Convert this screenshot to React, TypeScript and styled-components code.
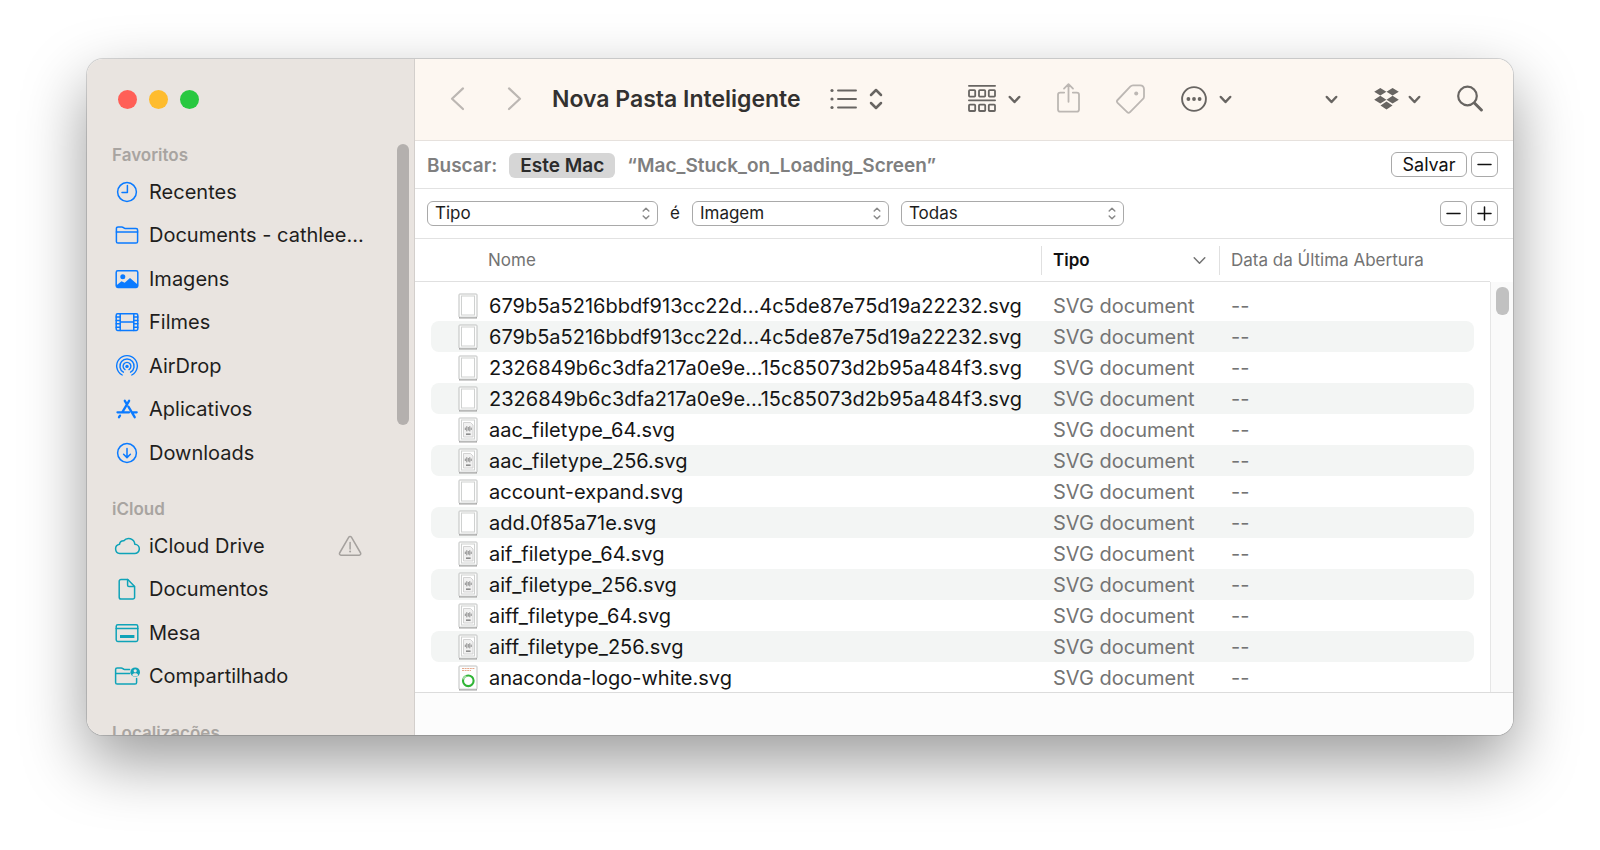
import React from "react";
import styled, { createGlobalStyle, css } from "styled-components";

const GlobalStyle = createGlobalStyle`
  * { box-sizing: border-box; }
  body {
    margin: 0;
    background: #fff;
    font-family: Inter, "Liberation Sans", sans-serif;
    color: #1d1d1d;
  }
  button, select { font: inherit; color: inherit; }
  svg { display: block; flex: none; }
`;

/* ---------- Window frame ---------- */

const Desktop = styled.div`
  display: flex;
  height: 100vh;
  padding: 59px 87px 115px;
  overflow: hidden;
`;

const Window = styled.div`
  display: flex;
  flex: 1;
  min-width: 0;
  overflow: hidden;
  border-radius: 16px;
  background: #fff;
  box-shadow: 0 0 0 1px rgba(0, 0, 0, 0.14), 0 26px 64px rgba(0, 0, 0, 0.4);
`;

/* ---------- Sidebar ---------- */

const Sidebar = styled.aside`
  position: relative;
  flex: 0 0 328px;
  overflow: hidden;
  border-right: 1px solid #d3cfcc;
  background: #e9e4e0;
`;

const TrafficLights = styled.div`
  display: flex;
  align-items: center;
  gap: 12px;
  height: 81px;
  padding-left: 31px;
`;

const Light = styled.button<{ $color: string }>`
  width: 19px;
  height: 19px;
  padding: 0;
  border: 0;
  border-radius: 50%;
  background: ${(p) => p.$color};
`;

const Section = styled.section`
  margin-bottom: 20px;
`;

const SectionTitle = styled.h2`
  margin: 0;
  padding-left: 25px;
  font-size: 17px;
  font-weight: 600;
  line-height: 30px;
  color: #a8a4a1;
`;

const Places = styled.ul`
  display: grid;
  grid-auto-rows: 43px 44px;
  margin: 0;
  padding: 0;
  list-style: none;
`;

const Place = styled.a<{ $tint: string }>`
  display: flex;
  align-items: center;
  gap: 9px;
  height: 100%;
  padding: 0 51px 0 27px;
  color: ${(p) => p.$tint};
  text-decoration: none;
`;

const PlaceName = styled.span`
  flex: 1;
  font-size: 20px;
  line-height: 28px;
  color: #1f1e1d;
  white-space: nowrap;
`;

const SidebarThumb = styled.div`
  position: absolute;
  top: 85px;
  right: 5px;
  width: 12px;
  height: 281px;
  border-radius: 6px;
  background: #b4b0ae;
`;

/* ---------- Main column ---------- */

const Main = styled.main`
  display: flex;
  flex: 1;
  flex-direction: column;
  min-width: 0;
`;

const Toolbar = styled.header`
  display: flex;
  flex: none;
  align-items: center;
  height: 82px;
  padding: 0 30px 2px 34px;
  border-bottom: 1px solid #e6e1dd;
  background: #fdf7f1;
`;

const ToolGroup = styled.div<{ $gap: number; $end?: boolean }>`
  display: flex;
  align-items: center;
  gap: ${(p) => p.$gap}px;
  ${(p) => p.$end && css`margin-left: auto;`}
`;

const ToolButton = styled.button<{ $dim?: boolean; $width?: number; $tight?: boolean }>`
  display: flex;
  align-items: center;
  justify-content: flex-end;
  gap: ${(p) => (p.$tight ? 9 : 12)}px;
  ${(p) => p.$width && css`width: ${p.$width}px;`}
  padding: 0;
  border: 0;
  background: none;
  color: ${(p) => (p.$dim ? "#bcb7b3" : "#686562")};
`;

const Title = styled.h1`
  margin: 0 29px;
  font-size: 23px;
  font-weight: 600;
  line-height: 32px;
  color: #333130;
  white-space: nowrap;
`;

const Bar = styled.div<{ $height: number }>`
  display: flex;
  flex: none;
  align-items: center;
  gap: 12px;
  height: ${(p) => p.$height}px;
  padding: 0 15px 0 12px;
  border-bottom: 1px solid #e2e2e2;
`;

const ScopeLabel = styled.span`
  margin-top: 2px;
  font-size: 19px;
  font-weight: 600;
  line-height: 25px;
  color: #7f7f7f;
`;

const Scope = styled.button<{ $active?: boolean }>`
  height: 25px;
  margin: 2px 0 0;
  padding: 0 ${(p) => (p.$active ? 11 : 0)}px;
  border: 0;
  border-radius: 6px;
  background: ${(p) => (p.$active ? "#d6d6d6" : "transparent")};
  font-size: 19px;
  font-weight: 600;
  line-height: 25px;
  color: ${(p) => (p.$active ? "#2b2b2b" : "#7f7f7f")};
  white-space: nowrap;
`;

const BarActions = styled.div`
  display: flex;
  gap: 4px;
  margin-left: auto;
`;

const SmallButton = styled.button<{ $width: number }>`
  display: flex;
  align-items: center;
  justify-content: center;
  width: ${(p) => p.$width}px;
  height: 25px;
  padding: 0;
  border: 1px solid #a9a9a9;
  border-radius: 6px;
  background: #fff;
  font-size: 18px;
  line-height: 22px;
  color: #111;
`;

const SelectBox = styled.div<{ $width: number }>`
  position: relative;
  flex: 0 1 ${(p) => p.$width}px;
  color: #8a8a8a;

  svg {
    position: absolute;
    top: 6px;
    right: 8px;
    pointer-events: none;
  }
`;

const Select = styled.select`
  appearance: none;
  display: block;
  width: 100%;
  height: 25px;
  padding: 0 24px 0 7px;
  border: 1px solid #a9a9a9;
  border-radius: 6px;
  background: #fff;
  font-size: 17px;
  line-height: 23px;
  color: #1d1d1d;
`;

const Joiner = styled.span`
  font-size: 17px;
  line-height: 25px;
`;

/* ---------- File list ---------- */

const FileArea = styled.div`
  display: flex;
  flex: 1;
  min-height: 0;
  overflow: hidden;
`;

const FileTable = styled.table`
  display: flex;
  flex: 1;
  flex-direction: column;
  min-width: 0;
`;

const columns = css`
  display: grid;
  grid-template-columns: minmax(0, 1fr) 178px 255px;
`;

const HeadRow = styled.tr`
  ${columns}
  height: 43px;
  padding: 0 16px;
  align-items: center;
  border-bottom: 1px solid #e0e0e0;
`;

const HeadCell = styled.th<{ $first?: boolean }>`
  height: 29px;
  padding: 0 0 0 ${(p) => (p.$first ? 57 : 11)}px;
  border-left: ${(p) => (p.$first ? 0 : 1)}px solid #e0e0e0;
  text-align: left;
`;

const SortButton = styled.button<{ $active?: boolean }>`
  display: flex;
  align-items: center;
  justify-content: space-between;
  width: 100%;
  height: 29px;
  padding: 0 13px 0 0;
  border: 0;
  background: none;
  font-size: 17px;
  font-weight: ${(p) => (p.$active ? 600 : 400)};
  line-height: 24px;
  color: ${(p) => (p.$active ? "#111" : "#737373")};
  white-space: nowrap;
`;

const Body = styled.tbody`
  padding-top: 8px;
`;

const FileRow = styled.tr`
  ${columns}
  height: 31px;
  margin: 0 16px;
  border-radius: 8px;

  &:nth-child(even) { background: #f3f5f4; }
`;

const Cell = styled.td`
  padding: 2px 0 0 12px;
  font-size: 20px;
  line-height: 29px;
  color: #747474;
  white-space: nowrap;
`;

const NameCell = styled(Cell)`
  display: flex;
  align-items: center;
  gap: 11px;
  padding: 0 0 0 27px;
  overflow: hidden;
  color: #151515;
`;

const FileName = styled.span`
  padding-top: 2px;
`;

const Gutter = styled.div`
  flex: 0 0 23px;
  margin-top: 43px;
  padding: 5px 4px 0 5px;
  border-left: 1px solid #e6e6e6;
  background: #fafafa;
`;

const GutterThumb = styled.div`
  height: 28px;
  border-radius: 6px;
  background: #c1c1c1;
`;

const Footer = styled.footer`
  flex: none;
  height: 43px;
  border-top: 1px solid #dcdcdc;
  background: #fcfcfc;
`;

/* ---------- Icons ---------- */

const line = {
  fill: "none",
  stroke: "currentColor",
  strokeWidth: 1.5,
  strokeLinecap: "round" as const,
  strokeLinejoin: "round" as const,
};

const SideIcon = ({ children }: { children: React.ReactNode }) => (
  <svg width="26" height="26" viewBox="0 0 26 26" aria-hidden="true" {...line}>
    {children}
  </svg>
);

const ClockIcon = () => (
  <SideIcon>
    <circle cx="13" cy="13" r="9.4" />
    <path d="M13.4 6.6v6.8H8" />
  </SideIcon>
);

const FolderIcon = () => (
  <SideIcon>
    <path d="M2.4 6.5a1.6 1.6 0 0 1 1.6-1.6h3.8c1.6 0 1.8 1.5 3.4 1.5H22a1.6 1.6 0 0 1 1.6 1.6v11.4a1.6 1.6 0 0 1-1.6 1.6H4a1.6 1.6 0 0 1-1.6-1.6z" />
    <path d="M2.4 10h21.2" />
  </SideIcon>
);

const PictureIcon = () => (
  <SideIcon>
    <rect x="2.2" y="4.8" width="21.6" height="16.6" rx="1.6" />
    <circle cx="8.8" cy="10.8" r="2.5" fill="currentColor" stroke="none" />
    <path d="M2.5 19.2l5-4 3.2 1.6 5.3-4.8 7.6 6.6v2.4H2.5z" fill="currentColor" stroke="none" />
  </SideIcon>
);

const FilmIcon = () => (
  <SideIcon>
    <rect x="2.2" y="4.8" width="21.6" height="16.6" rx="1.4" />
    <path d="M6.2 5v16.4M19.8 5v16.4M6.2 13h13.6" />
    <path d="M2.2 8h4M2.2 11.4h4M2.2 14.8h4M2.2 18.2h4M19.8 8h4M19.8 11.4h4M19.8 14.8h4M19.8 18.2h4" />
  </SideIcon>
);

const AirDropIcon = () => (
  <SideIcon>
    <circle cx="13" cy="13.4" r="1.7" fill="currentColor" stroke="none" />
    <path strokeWidth="1.4" d="M11 16.6a3.9 3.9 0 1 1 4 0" />
    <path strokeWidth="1.4" d="M9.4 19.2a7.1 7.1 0 1 1 7.2 0" />
    <path strokeWidth="1.4" d="M8.2 22a10.3 10.3 0 1 1 9.6 0" />
  </SideIcon>
);

const AppsIcon = () => (
  <SideIcon>
    <g strokeWidth="2.3">
      <path d="M10.8 4.8l1.7 2.9M15.1 4.8l-6.6 11M3.5 16.3h11.6M22.7 16.3h-4.2M14.4 10.6l6.3 10.6M6 19.6l-1 1.6" />
    </g>
  </SideIcon>
);

const DownloadIcon = () => (
  <SideIcon>
    <circle cx="13" cy="13" r="9.4" />
    <path d="M13 8.4v9M9.6 14.2l3.4 3.4 3.4-3.4" />
  </SideIcon>
);

const CloudIcon = () => (
  <SideIcon>
    <path d="M5.800 20.600a4.700 4.700 0 0 1-.3-9.300 4.200 4.200 0 0 1 4.300-3.500 6.200 6.200 0 0 1 11 3.400 4.700 4.700 0 0 1-.4 9.400z" />
  </SideIcon>
);

const DocumentIcon = () => (
  <SideIcon>
    <path d="M7 3.4h6.8l6.800 7v10.800a1.800 1.800 0 0 1-1.800 1.800H7a1.800 1.800 0 0 1-1.800-1.800V5.200A1.800 1.800 0 0 1 7 3.400z" />
    <path d="M13.600 3.600v5.600a1.400 1.400 0 0 0 1.400 1.400h5.400" />
  </SideIcon>
);

const DesktopIcon = () => (
  <SideIcon>
    <rect x="2.2" y="4.8" width="21.6" height="16.6" rx="1.6" />
    <path d="M2.2 8.4h21.6" />
    <rect x="6" y="15" width="14.4" height="3" fill="currentColor" stroke="none" />
  </SideIcon>
);

const SharedIcon = () => (
  <SideIcon>
    <path d="M15.600 6.400h-5c-1.600 0-1.800-1.500-3.400-1.500H3.200a1.600 1.600 0 0 0-1.600 1.600v12.900A1.600 1.600 0 0 0 3.200 21H21a1.600 1.600 0 0 0 1.600-1.600v-3.800M1.600 10.400h14" />
    <circle cx="21.200" cy="9.200" r="4.800" fill="currentColor" stroke="none" />
    <circle cx="21.200" cy="7.800" r="1.600" fill="#e9e4e0" stroke="none" />
    <path d="M18.200 12.200c.4-2.600 5.600-2.600 6 0-1.400 1.800-4.600 1.800-6 0z" fill="#e9e4e0" stroke="none" />
  </SideIcon>
);

const WarningIcon = () => (
  <svg width="26" height="26" viewBox="0 0 26 26" role="img" aria-label="Alerta" {...line} stroke="#a5a19e">
    <path d="M11.800 4.200a1.500 1.500 0 0 1 2.600 0l9.200 15.800a1.500 1.500 0 0 1-1.300 2.200H3.900a1.500 1.500 0 0 1-1.300-2.200z" />
    <path d="M13.100 9.600v6.400" />
    <circle cx="13.100" cy="18.600" r="1" fill="#a5a19e" stroke="none" />
  </svg>
);

const NavArrow = ({ forward }: { forward?: boolean }) => (
  <svg width="17" height="26" viewBox="0 0 17 26" {...line} strokeWidth={2.2}>
    <path d={forward ? "M3 2.400l11 10.300L3 23" : "M14 2.400L3 12.700 14 23"} />
  </svg>
);

const DownCaret = () => (
  <svg width="13" height="10" viewBox="0 0 13 10" {...line} strokeWidth={2.5}>
    <path d="M1.800 3l4.700 5 4.700-5" />
  </svg>
);

const ListViewIcon = () => (
  <svg width="27" height="22" viewBox="0 0 27 22" {...line} strokeWidth={1.9}>
    <path d="M8 2.500h18M8 11h18M8 19.500h18" />
    <g fill="currentColor" stroke="none">
      <circle cx="2" cy="2.500" r="1.600" />
      <circle cx="2" cy="11" r="1.600" />
      <circle cx="2" cy="19.500" r="1.600" />
    </g>
  </svg>
);

const UpDownIcon = () => (
  <svg width="14" height="22" viewBox="0 0 14 22" {...line} strokeWidth={2.5}>
    <path d="M2 7l5-5 5 5M2 15l5 5 5-5" />
  </svg>
);

const GroupIcon = () => (
  <svg width="28" height="29" viewBox="0 0 28 29" {...line} strokeWidth={1.8}>
    <path d="M.9 1.800h26.200M.9 16.300h26.200" />
    {[6.2, 20.6].map((y) =>
      [1, 11, 20.8].map((x) => <rect key={`${x}-${y}`} x={x} y={y} width="6.2" height="6.4" rx=".8" />)
    )}
  </svg>
);

const ShareIcon = () => (
  <svg width="23" height="34" viewBox="0 0 23 34" {...line} strokeWidth={1.8}>
    <path d="M7.200 10.600H3.200A2.200 2.200 0 0 0 1 12.800v14.600a2.200 2.200 0 0 0 2.200 2.200h16.600a2.200 2.200 0 0 0 2.200-2.200V12.800a2.200 2.200 0 0 0-2.200-2.200h-4M11.500 19.800V2.200M7 6.600l4.500-4.500L16 6.600" />
  </svg>
);

const TagIcon = () => (
  <svg width="29" height="30" viewBox="0 0 29 30" {...line} strokeWidth={1.8}>
    <path d="M17 1.400h7.200a4 4 0 0 1 3.800 3.800v7.200a4 4 0 0 1-1.200 2.800L14 28.200a2 2 0 0 1-2.800 0L1.600 18.800a2 2 0 0 1 0-2.800L14.200 2.600A4 4 0 0 1 17 1.400z" />
    <circle cx="20.200" cy="9.400" r="2" fill="currentColor" stroke="none" />
  </svg>
);

const MoreIcon = () => (
  <svg width="26" height="26" viewBox="0 0 26 26" {...line} strokeWidth={1.9}>
    <circle cx="13" cy="13" r="11.900" />
    <g fill="currentColor" stroke="none">
      <circle cx="7.400" cy="13" r="1.900" />
      <circle cx="13" cy="13" r="1.900" />
      <circle cx="18.600" cy="13" r="1.900" />
    </g>
  </svg>
);

const DropboxIcon = () => (
  <svg width="25" height="22" viewBox="0 0 25 22" fill="currentColor">
    <path d="M6.300 0l6.100 3.800-6.100 3.800L.2 3.800zM18.600 0l6.200 3.800-6.200 3.800-6.100-3.800zM6.300 7.800l6.100 3.900-6.100 3.800-6.100-3.800zM18.600 7.800l6.200 3.900-6.200 3.800-6.100-3.800zM12.500 13.600l6 3.900-6 4-6-4z" />
  </svg>
);

const SearchIcon = () => (
  <svg width="26" height="27" viewBox="0 0 26 27" {...line} strokeWidth={2.2}>
    <circle cx="10.500" cy="11" r="9.300" />
    <path d="M17.400 18l7 7" strokeWidth="3" />
  </svg>
);

const SelectArrows = () => (
  <svg width="8" height="13" viewBox="0 0 8 13" {...line}>
    <path d="M1.200 4L4 1.200 6.800 4M1.200 9L4 11.800 6.800 9" />
  </svg>
);

const SortArrow = () => (
  <svg width="13" height="9" viewBox="0 0 13 9" {...line} stroke="#737373">
    <path d="M1.200 1.800l5.300 5.400 5.300-5.400" />
  </svg>
);

const PlusMinus = ({ plus }: { plus?: boolean }) => (
  <svg width="15" height="15" viewBox="0 0 15 15" {...line}>
    <path d={plus ? "M1 7.500h13M7.500 1v13" : "M1 7.500h13"} />
  </svg>
);

type Preview = "blank" | "audio" | "logo";

const FileIcon = ({ preview }: { preview: Preview }) => (
  <svg width="20" height="26" viewBox="0 0 20 26" fill="none" aria-hidden="true">
    <path d="M1 24.600h18" stroke="#8a8a8a" strokeWidth="1.600" />
    <rect x="1" y="1" width="18" height="23.200" rx=".8" fill="#fdfdfd" stroke="#bfc1c0" />
    {preview !== "logo" && <rect x="3.500" y="3" width="13" height="19" fill="#fff" stroke="#cfd1d0" />}
    {preview === "audio" && (
      <>
        <path d="M5.500 5.500h7l2.500 2.500v12H5.500z" fill="#f1f1f1" stroke="#c9c9c9" strokeWidth=".8" />
        <path d="M7.300 10.600v2.400M8.800 9.200v5.200M10.300 10v3.600M11.800 9.200v5.200M13.200 10.600v2.400" stroke="#8d8d8d" />
        <path d="M8 17.200h4.600" stroke="#8d8d8d" strokeWidth="1.600" />
      </>
    )}
    {preview === "logo" && (
      <>
        <path d="M4 3.500h13M4 5.500h9" stroke="#e5a98d" strokeDasharray="2 .6" />
        <circle cx="10.300" cy="15.800" r="5.300" fill="#fff" stroke="#2fb435" strokeWidth="2.100" />
        <path d="M5.300 14.400a5.300 5.300 0 0 1 3-3.500" stroke="#a5dba6" strokeWidth="2.200" />
      </>
    )}
  </svg>
);

/* ---------- Data ---------- */

const BLUE = "#0a7aff";
const TEAL = "#0fa3b8";

const sections = [
  {
    title: "Favoritos",
    tint: BLUE,
    places: [
      { name: "Recentes", Icon: ClockIcon },
      { name: "Documents - cathlee...", Icon: FolderIcon },
      { name: "Imagens", Icon: PictureIcon },
      { name: "Filmes", Icon: FilmIcon },
      { name: "AirDrop", Icon: AirDropIcon },
      { name: "Aplicativos", Icon: AppsIcon },
      { name: "Downloads", Icon: DownloadIcon },
    ],
  },
  {
    title: "iCloud",
    tint: TEAL,
    places: [
      { name: "iCloud Drive", Icon: CloudIcon, warning: true },
      { name: "Documentos", Icon: DocumentIcon },
      { name: "Mesa", Icon: DesktopIcon },
      { name: "Compartilhado", Icon: SharedIcon },
    ],
  },
  { title: "Localizações", tint: TEAL, places: [] },
] as {
  title: string;
  tint: string;
  places: { name: string; Icon: () => React.ReactElement; warning?: boolean }[];
}[];

const files: [string, Preview][] = [
  ["679b5a5216bbdf913cc22d...4c5de87e75d19a22232.svg", "blank"],
  ["679b5a5216bbdf913cc22d...4c5de87e75d19a22232.svg", "blank"],
  ["2326849b6c3dfa217a0e9e...15c85073d2b95a484f3.svg", "blank"],
  ["2326849b6c3dfa217a0e9e...15c85073d2b95a484f3.svg", "blank"],
  ["aac_filetype_64.svg", "audio"],
  ["aac_filetype_256.svg", "audio"],
  ["account-expand.svg", "blank"],
  ["add.0f85a71e.svg", "blank"],
  ["aif_filetype_64.svg", "audio"],
  ["aif_filetype_256.svg", "audio"],
  ["aiff_filetype_64.svg", "audio"],
  ["aiff_filetype_256.svg", "audio"],
  ["anaconda-logo-white.svg", "logo"],
];

const PopUp = ({ label, value, width }: { label: string; value: string; width: number }) => (
  <SelectBox $width={width}>
    <Select aria-label={label} defaultValue={value}>
      <option>{value}</option>
    </Select>
    <SelectArrows />
  </SelectBox>
);

export default function App() {
  return (
    <>
      <GlobalStyle />
      <Desktop>
        <Window>
          <Sidebar>
            <TrafficLights>
              <Light $color="#ff5f57" aria-label="Fechar" />
              <Light $color="#febc2e" aria-label="Minimizar" />
              <Light $color="#28c840" aria-label="Ampliar" />
            </TrafficLights>
            {sections.map((section) => (
              <Section key={section.title}>
                <SectionTitle>{section.title}</SectionTitle>
                <Places>
                  {section.places.map(({ name, Icon, warning }) => (
                    <li key={name}>
                      <Place href="#" $tint={section.tint}>
                        <Icon />
                        <PlaceName>{name}</PlaceName>
                        {warning && <WarningIcon />}
                      </Place>
                    </li>
                  ))}
                </Places>
              </Section>
            ))}
            <SidebarThumb />
          </Sidebar>

          <Main>
            <Toolbar>
              <ToolGroup $gap={40}>
                <ToolButton $dim aria-label="Voltar"><NavArrow /></ToolButton>
                <ToolButton $dim aria-label="Avançar"><NavArrow forward /></ToolButton>
              </ToolGroup>
              <Title>Nova Pasta Inteligente</Title>
              <ToolButton aria-label="Visualização"><ListViewIcon /><UpDownIcon /></ToolButton>
              <ToolGroup $gap={36} $end>
                <ToolButton aria-label="Agrupar"><GroupIcon /><DownCaret /></ToolButton>
                <ToolButton $dim aria-label="Compartilhar"><ShareIcon /></ToolButton>
                <ToolButton $dim aria-label="Etiquetas"><TagIcon /></ToolButton>
                <ToolButton aria-label="Ações"><MoreIcon /><DownCaret /></ToolButton>
                <ToolButton $width={70} aria-label="Opções"><DownCaret /></ToolButton>
                <ToolButton $tight aria-label="Dropbox"><DropboxIcon /><DownCaret /></ToolButton>
                <ToolButton aria-label="Pesquisar"><SearchIcon /></ToolButton>
              </ToolGroup>
            </Toolbar>

            <Bar $height={48}>
              <ScopeLabel>Buscar:</ScopeLabel>
              <Scope $active>Este Mac</Scope>
              <Scope>“Mac_Stuck_on_Loading_Screen”</Scope>
              <BarActions>
                <SmallButton $width={76}>Salvar</SmallButton>
                <SmallButton $width={27} aria-label="Remover busca"><PlusMinus /></SmallButton>
              </BarActions>
            </Bar>

            <Bar $height={50}>
              <PopUp label="Atributo" value="Tipo" width={231} />
              <Joiner>é</Joiner>
              <PopUp label="Tipo de arquivo" value="Imagem" width={197} />
              <PopUp label="Formato" value="Todas" width={223} />
              <BarActions>
                <SmallButton $width={27} aria-label="Remover critério"><PlusMinus /></SmallButton>
                <SmallButton $width={27} aria-label="Adicionar critério"><PlusMinus plus /></SmallButton>
              </BarActions>
            </Bar>

            <FileArea>
              <FileTable>
                <thead>
                  <HeadRow>
                    <HeadCell $first><SortButton>Nome</SortButton></HeadCell>
                    <HeadCell><SortButton $active>Tipo<SortArrow /></SortButton></HeadCell>
                    <HeadCell><SortButton>Data da Última Abertura</SortButton></HeadCell>
                  </HeadRow>
                </thead>
                <Body>
                  {files.map(([name, preview], i) => (
                    <FileRow key={i}>
                      <NameCell><FileIcon preview={preview} /><FileName>{name}</FileName></NameCell>
                      <Cell>SVG document</Cell>
                      <Cell>--</Cell>
                    </FileRow>
                  ))}
                </Body>
              </FileTable>
              <Gutter><GutterThumb /></Gutter>
            </FileArea>
            <Footer />
          </Main>
        </Window>
      </Desktop>
    </>
  );
}
